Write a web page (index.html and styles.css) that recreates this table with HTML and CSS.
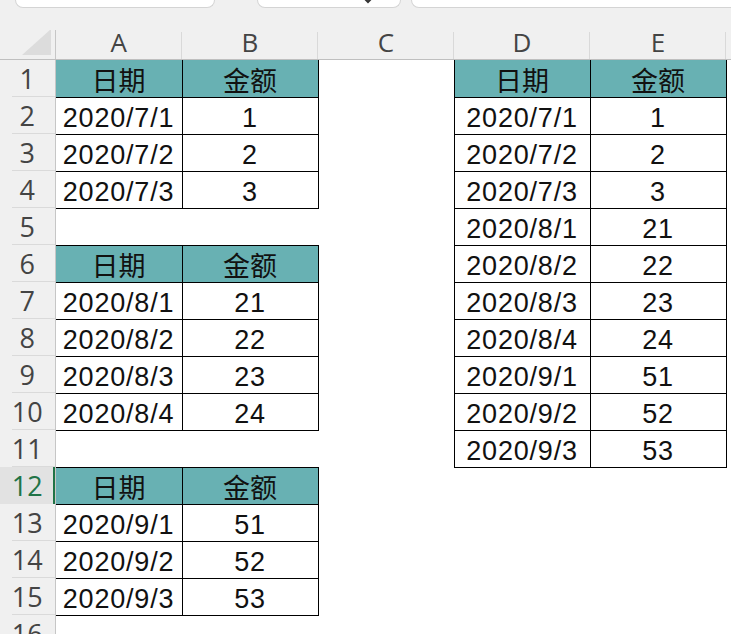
FILE: index.html
```html
<!DOCTYPE html>
<html lang="zh-CN">
<head>
<meta charset="utf-8">
<title>Sheet</title>
<link rel="stylesheet" href="styles.css">
</head>
<body>
<div class="app">
  <div class="topbar">
    <div class="box box-name"></div>
    <div class="box box-mid">
      <svg class="chev" width="10" height="6" viewBox="0 0 10 6"><path d="M1 -2 L5 2 L9 -2" fill="none" stroke="#333" stroke-width="2"/></svg>
    </div>
    <div class="box box-formula"></div>
  </div>
  <table class="sheet">
    <colgroup>
      <col class="c-rh"><col class="c-a"><col class="c-n"><col class="c-n"><col class="c-n"><col class="c-n"><col class="c-n">
    </colgroup>
    <thead>
      <tr class="hdr">
        <th class="corner"><svg width="55" height="29" viewBox="0 0 55 29"><polygon points="51,-1 51,25 22,25" fill="#dcdcdc"/></svg></th>
        <th class="colh">A</th><th class="colh">B</th><th class="colh">C</th><th class="colh">D</th><th class="colh">E</th><th class="colh"></th>
      </tr>
    </thead>
    <tbody>
      <tr><th class="rowh">1</th><td class="b h">日期</td><td class="b h">金额</td><td></td><td class="b h">日期</td><td class="b h">金额</td><td></td></tr>
      <tr><th class="rowh">2</th><td class="b">2020/7/1</td><td class="b">1</td><td></td><td class="b">2020/7/1</td><td class="b">1</td><td></td></tr>
      <tr><th class="rowh">3</th><td class="b">2020/7/2</td><td class="b">2</td><td></td><td class="b">2020/7/2</td><td class="b">2</td><td></td></tr>
      <tr><th class="rowh">4</th><td class="b">2020/7/3</td><td class="b">3</td><td></td><td class="b">2020/7/3</td><td class="b">3</td><td></td></tr>
      <tr><th class="rowh">5</th><td></td><td></td><td></td><td class="b">2020/8/1</td><td class="b">21</td><td></td></tr>
      <tr><th class="rowh">6</th><td class="b h">日期</td><td class="b h">金额</td><td></td><td class="b">2020/8/2</td><td class="b">22</td><td></td></tr>
      <tr><th class="rowh">7</th><td class="b">2020/8/1</td><td class="b">21</td><td></td><td class="b">2020/8/3</td><td class="b">23</td><td></td></tr>
      <tr><th class="rowh">8</th><td class="b">2020/8/2</td><td class="b">22</td><td></td><td class="b">2020/8/4</td><td class="b">24</td><td></td></tr>
      <tr><th class="rowh">9</th><td class="b">2020/8/3</td><td class="b">23</td><td></td><td class="b">2020/9/1</td><td class="b">51</td><td></td></tr>
      <tr><th class="rowh">10</th><td class="b">2020/8/4</td><td class="b">24</td><td></td><td class="b">2020/9/2</td><td class="b">52</td><td></td></tr>
      <tr><th class="rowh">11</th><td></td><td></td><td></td><td class="b">2020/9/3</td><td class="b">53</td><td></td></tr>
      <tr class="sel"><th class="rowh">12</th><td class="b h">日期</td><td class="b h">金额</td><td></td><td></td><td></td><td></td></tr>
      <tr><th class="rowh">13</th><td class="b">2020/9/1</td><td class="b">51</td><td></td><td></td><td></td><td></td></tr>
      <tr><th class="rowh">14</th><td class="b">2020/9/2</td><td class="b">52</td><td></td><td></td><td></td><td></td></tr>
      <tr><th class="rowh">15</th><td class="b">2020/9/3</td><td class="b">53</td><td></td><td></td><td></td><td></td></tr>
      <tr><th class="rowh">16</th><td></td><td></td><td></td><td></td><td></td><td></td></tr>
    </tbody>
  </table>
</div>
</body>
</html>
```
FILE: styles.css
```css
html, body {
  margin: 0;
  padding: 0;
  background: #ffffff;
  overflow: hidden;
}
.app {
  width: 731px;
  height: 634px;
  overflow: hidden;
}
.topbar {
  height: 30px;
  background: #f0f0f0;
  display: flex;
  align-items: flex-start;
  position: relative;
}
.box {
  height: 8px;
  background: #ffffff;
  border: 1px solid #d4d4d4;
  border-top: none;
  border-radius: 0 0 8px 8px;
  box-sizing: border-box;
  flex: none;
  position: relative;
}
.box-name { margin-left: 15px; width: 200px; }
.box-mid { margin-left: 42px; width: 144px; }
.box-formula { margin-left: 10px; width: 340px; }
.chev { position: absolute; left: 105px; top: 0; }

.sheet {
  border-collapse: collapse;
  table-layout: fixed;
  width: 862px;
  font-family: "Liberation Sans", Arial, "Noto Sans CJK SC", sans-serif;
}
.c-rh { width: 55px; }
.c-a { width: 127px; }
.c-n { width: 136px; }

.hdr th {
  height: 29px;
  padding: 0;
  background: #f0f0f0;
  border-bottom: 1px solid #bfbfbf;
  font-family: "Open Sans", sans-serif;
  font-weight: 400;
  font-size: 26px;
  color: #444444;
  line-height: 24px;
  vertical-align: top;
}
.hdr th.colh { background: linear-gradient(#d9d9d9, #d9d9d9) no-repeat right 0 bottom 0 / 1px 27px, #f0f0f0; }
.corner { border-right: 1px solid #c6c6c6; }
.corner svg { display: block; }

tbody tr { height: 37px; }
.rowh {
  padding: 0;
  background: linear-gradient(#dadada, #dadada) no-repeat 12px 100% / calc(100% - 12px) 1px, #f0f0f0;
  border-right: 1px solid #c6c6c6;
  font-family: "Open Sans", sans-serif;
  font-weight: 400;
  font-size: 27px;
  color: #444444;
  text-align: center;
  vertical-align: middle;
  line-height: 37px;
}
.sel .rowh {
  background: #e2e2e2;
  color: #217346;
  box-shadow: inset -2px 0 0 #217346;
}

td {
  padding: 0;
  text-align: center;
  vertical-align: bottom;
  font-size: 27px;
  letter-spacing: 0.8px;
  color: #111111;
  line-height: 31px;
  white-space: nowrap;
}
td.b { border: 1px solid #000000; }
td.h {
  background: #68b1b3;
  font-family: "Noto Sans CJK SC", sans-serif;
  letter-spacing: 0;
  line-height: 35px;
}
```
